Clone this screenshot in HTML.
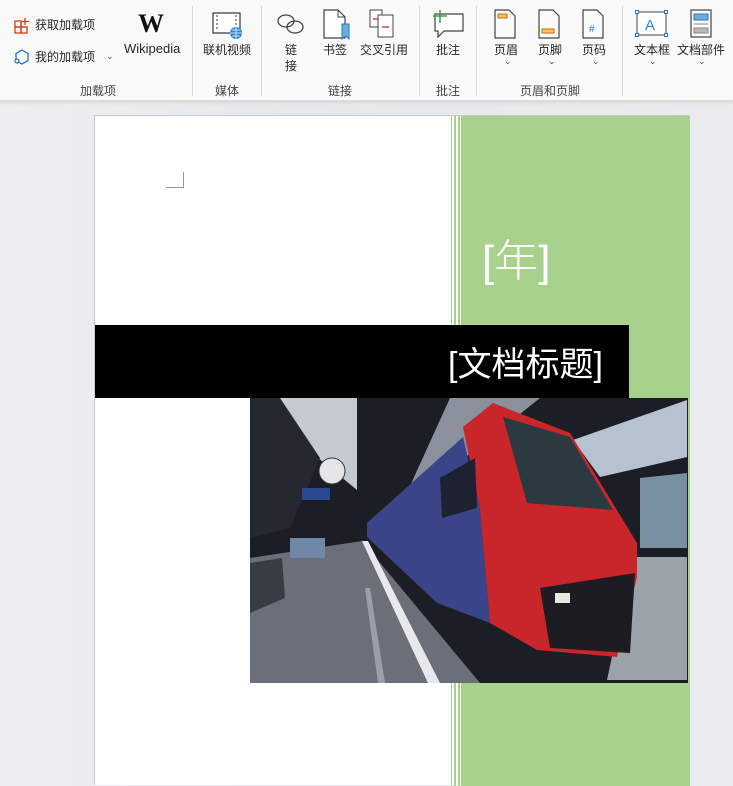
<!DOCTYPE html>
<html><head><meta charset="utf-8"><style>
*{margin:0;padding:0;box-sizing:border-box}
body{width:733px;height:779px;overflow:hidden;background:linear-gradient(90deg,#eceef0 0%,#e6e9ec 40%,#e9ebee 100%);font-family:"Liberation Sans","Noto Sans CJK SC",sans-serif;position:relative;color:#222}
#rib{position:absolute;left:0;top:0;width:733px;height:101px;background:#f9f9f9;border-bottom:1px solid #dcdcdc;box-shadow:0 2px 3px rgba(0,0,0,.08)}
.t{position:absolute;font-size:12px;white-space:nowrap;color:#262626}
.g{position:absolute;font-size:12px;color:#444;top:82px}
.sep{position:absolute;top:6px;width:1px;height:90px;background:#d8d8d8}
.chev{position:absolute;font-size:9px;color:#444}
#page{position:absolute;left:94px;top:115px;width:595px;height:670px;background:#fff;border:1px solid #c8c8c8;border-bottom:none}
</style></head><body>
<div id="rib">
 <svg style="position:absolute;left:14px;top:17px" width="17" height="17"><rect x="1" y="4" width="6" height="6" fill="none" stroke="#d04010" stroke-width="1.3"/><rect x="1" y="10" width="6" height="6" fill="none" stroke="#d04010" stroke-width="1.3"/><rect x="7" y="10" width="6" height="6" fill="none" stroke="#d04010" stroke-width="1.3"/><path d="M11 1v7M8 4.5h7" stroke="#d04010" stroke-width="1.3"/><path d="M7 4v6h6" fill="none" stroke="#d04010" stroke-width="1.3"/></svg>
 <div class="t" style="left:35px;top:16px">获取加载项</div>
 <svg style="position:absolute;left:14px;top:48px" width="17" height="18"><path d="M8 2l6 3.5v7L8 16 2 12.5v-7z" fill="none" stroke="#1e73c8" stroke-width="1.3"/><circle cx="3" cy="13" r="2" fill="#fff" stroke="#1e73c8" stroke-width="1.2"/></svg>
 <div class="t" style="left:35px;top:48px">我的加载项</div>
 <div class="chev" style="left:106px;top:51px">⌄</div>
 <div style="position:absolute;left:138px;top:9px;font-family:'Liberation Serif',serif;font-size:26px;font-weight:bold;color:#111">W</div>
 <div class="t" style="left:124px;top:41px;font-size:13px">Wikipedia</div>
 <div class="g" style="left:80px">加载项</div>
 <div class="sep" style="left:192px"></div>
 <svg style="position:absolute;left:212px;top:11px" width="32" height="30"><rect x="1" y="2" width="27" height="20" fill="#fff" stroke="#333" stroke-width="1.2"/><path d="M5 4v16M24 4v16" stroke="#333" stroke-dasharray="2 2"/><circle cx="24" cy="22" r="6" fill="#2b86d6"/><path d="M18 22h12M24 16v12M20 19h8M20 25h8" stroke="#fff" stroke-width=".8"/></svg>
 <div class="t" style="left:203px;top:41px">联机视频</div>
 <div class="g" style="left:215px">媒体</div>
 <div class="sep" style="left:261px"></div>
 <svg style="position:absolute;left:276px;top:12px" width="30" height="24"><ellipse cx="10" cy="9" rx="8" ry="6" fill="none" stroke="#444" stroke-width="1.3"/><ellipse cx="19" cy="15" rx="8" ry="6" fill="none" stroke="#444" stroke-width="1.3"/></svg>
 <div class="t" style="left:285px;top:41px">链</div><div class="t" style="left:285px;top:57px">接</div>
 <svg style="position:absolute;left:322px;top:9px" width="30" height="32"><path d="M2 1h14l7 7v21H2z" fill="#fff" stroke="#444" stroke-width="1.2"/><path d="M16 1v7h7" fill="none" stroke="#444"/><path d="M20 15h7v15l-3.5-3-3.5 3z" fill="#6aaee0" stroke="#2b78c0"/></svg>
 <div class="t" style="left:323px;top:41px">书签</div>
 <svg style="position:absolute;left:369px;top:9px" width="30" height="32"><path d="M1 1h12v17H1z" fill="#fff" stroke="#444"/><path d="M9 6h15v22H9z" fill="#fff" stroke="#444"/><path d="M4 10h5M13 18h7" stroke="#d02020" stroke-width="1.3"/></svg>
 <div class="t" style="left:360px;top:41px">交叉引用</div>
 <div class="g" style="left:328px">链接</div>
 <div class="sep" style="left:419px"></div>
 <svg style="position:absolute;left:431px;top:9px" width="34" height="30"><path d="M4 5h28v17H13l-6 6v-6H4z" fill="#fff" stroke="#444" stroke-width="1.2"/><path d="M9 1v13M2 7h14" stroke="#3aa040" stroke-width="1.5"/></svg>
 <div class="t" style="left:436px;top:41px">批注</div>
 <div class="g" style="left:436px">批注</div>
 <div class="sep" style="left:476px"></div>
 <svg style="position:absolute;left:494px;top:9px" width="24" height="30"><path d="M1 1h14l6 6v22H1z" fill="#fafafa" stroke="#444" stroke-width="1.2"/><rect x="4" y="5" width="9" height="4" fill="#f6c26a" stroke="#d06a00"/></svg>
 <div class="t" style="left:494px;top:41px">页眉</div><div class="chev" style="left:504px;top:56px">⌄</div>
 <svg style="position:absolute;left:538px;top:9px" width="24" height="30"><path d="M1 1h14l6 6v22H1z" fill="#fafafa" stroke="#444" stroke-width="1.2"/><rect x="4" y="20" width="12" height="4" fill="#f6c26a" stroke="#d06a00"/></svg>
 <div class="t" style="left:538px;top:41px">页脚</div><div class="chev" style="left:548px;top:56px">⌄</div>
 <svg style="position:absolute;left:582px;top:9px" width="24" height="30"><path d="M1 1h14l6 6v22H1z" fill="#fafafa" stroke="#444" stroke-width="1.2"/><text x="7" y="23" font-size="10" fill="#1e73c8" font-family="Liberation Sans">#</text></svg>
 <div class="t" style="left:582px;top:41px">页码</div><div class="chev" style="left:592px;top:56px">⌄</div>
 <div class="g" style="left:520px">页眉和页脚</div>
 <div class="sep" style="left:622px"></div>
 <svg style="position:absolute;left:635px;top:10px" width="34" height="28"><rect x="2" y="2" width="29" height="23" fill="#fff" stroke="#444"/><rect x="0.5" y="0.5" width="3" height="3" fill="#fff" stroke="#2b78c0"/><rect x="29.5" y="0.5" width="3" height="3" fill="#fff" stroke="#2b78c0"/><rect x="0.5" y="23.5" width="3" height="3" fill="#fff" stroke="#2b78c0"/><rect x="29.5" y="23.5" width="3" height="3" fill="#fff" stroke="#2b78c0"/><text x="10" y="20" font-size="15" fill="#2b86d6" font-family="Liberation Sans">A</text></svg>
 <div class="t" style="left:634px;top:41px">文本框</div><div class="chev" style="left:649px;top:56px">⌄</div>
 <svg style="position:absolute;left:690px;top:9px" width="24" height="30"><rect x="1" y="1" width="20" height="27" fill="#fafafa" stroke="#444" stroke-width="1.2"/><rect x="4" y="5" width="14" height="6" fill="#6aaee0" stroke="#2b78c0"/><path d="M4 15h14" stroke="#888"/><rect x="4" y="19" width="14" height="5" fill="#bbb" stroke="#888"/></svg>
 <div class="t" style="left:677px;top:41px">文档部件</div><div class="chev" style="left:698px;top:56px">⌄</div>
</div>

<div id="page">
 <div style="position:absolute;left:71px;top:56px;width:18px;height:16px;border-right:1px solid #999;border-bottom:1px solid #999"></div>
 <div style="position:absolute;left:356px;top:0;width:1px;height:670px;background:#a9d18e"></div>
 <div style="position:absolute;left:359px;top:0;width:2px;height:670px;background:#a9d18e"></div>
 <div style="position:absolute;left:363px;top:0;width:2px;height:670px;background:#a9d18e"></div>
 <div style="position:absolute;left:366px;top:0;width:229px;height:670px;background:#a9d18e"></div>
 <div style="position:absolute;left:387px;top:109px;font-size:44px;color:#fff;font-weight:300">[年]</div>
 <div style="position:absolute;left:0;top:209px;width:534px;height:73px;background:#000"></div>
 <div style="position:absolute;left:353px;top:221px;font-size:34px;color:#fff">[文档标题]</div>
 <svg style="position:absolute;left:155px;top:282px" width="438" height="285" viewBox="0 0 438 285">
  <rect width="438" height="285" fill="#1c1e25"/>
  <polygon points="27,0 107,0 107,92 50,45" fill="#c4c9d2"/>
  <polygon points="0,0 30,0 70,60 40,130 0,140" fill="#262830"/>
  <polygon points="0,160 112,143 230,285 0,285" fill="#6a6f7a"/>
  <polygon points="112,143 118,143 190,285 178,285" fill="#e6e8ec"/>
  <polygon points="115,190 120,190 135,285 128,285" fill="#9aa0aa"/>
  <polygon points="0,165 32,160 35,200 0,215" fill="#3a3c44"/>
  <polygon points="40,140 75,140 75,160 40,160" fill="#6f88a8"/>
  <circle cx="82" cy="73" r="13" fill="#e4e6ea" stroke="#333"/>
  <rect x="52" y="90" width="28" height="12" fill="#2a4a90"/>
  <polygon points="200,0 290,0 240,40 150,110" fill="#8a909c"/>
  <polygon points="323,42 437,2 437,59 350,79" fill="#b6c2cf"/>
  <polygon points="383,159 437,159 437,282 357,282" fill="#9ca2aa"/>
  <polygon points="390,80 437,75 437,150 390,150" fill="#7890a0"/>
  <polygon points="117,125 213,39 230,112 240,225 187,205 117,139" fill="#3a4488"/>
  <polygon points="213,29 243,5 320,35 387,145 387,179 367,259 287,252 240,225 230,112" fill="#c8262a"/>
  <polygon points="253,19 320,39 363,112 277,105" fill="#2a3a40"/>
  <polygon points="290,190 385,175 380,255 300,250" fill="#1c1c22"/>
  <polygon points="190,80 225,60 227,110 192,120" fill="#1e2230"/>
  <rect x="305" y="195" width="15" height="10" fill="#e8e8e0"/>
 </svg>
</div>
</body></html>
